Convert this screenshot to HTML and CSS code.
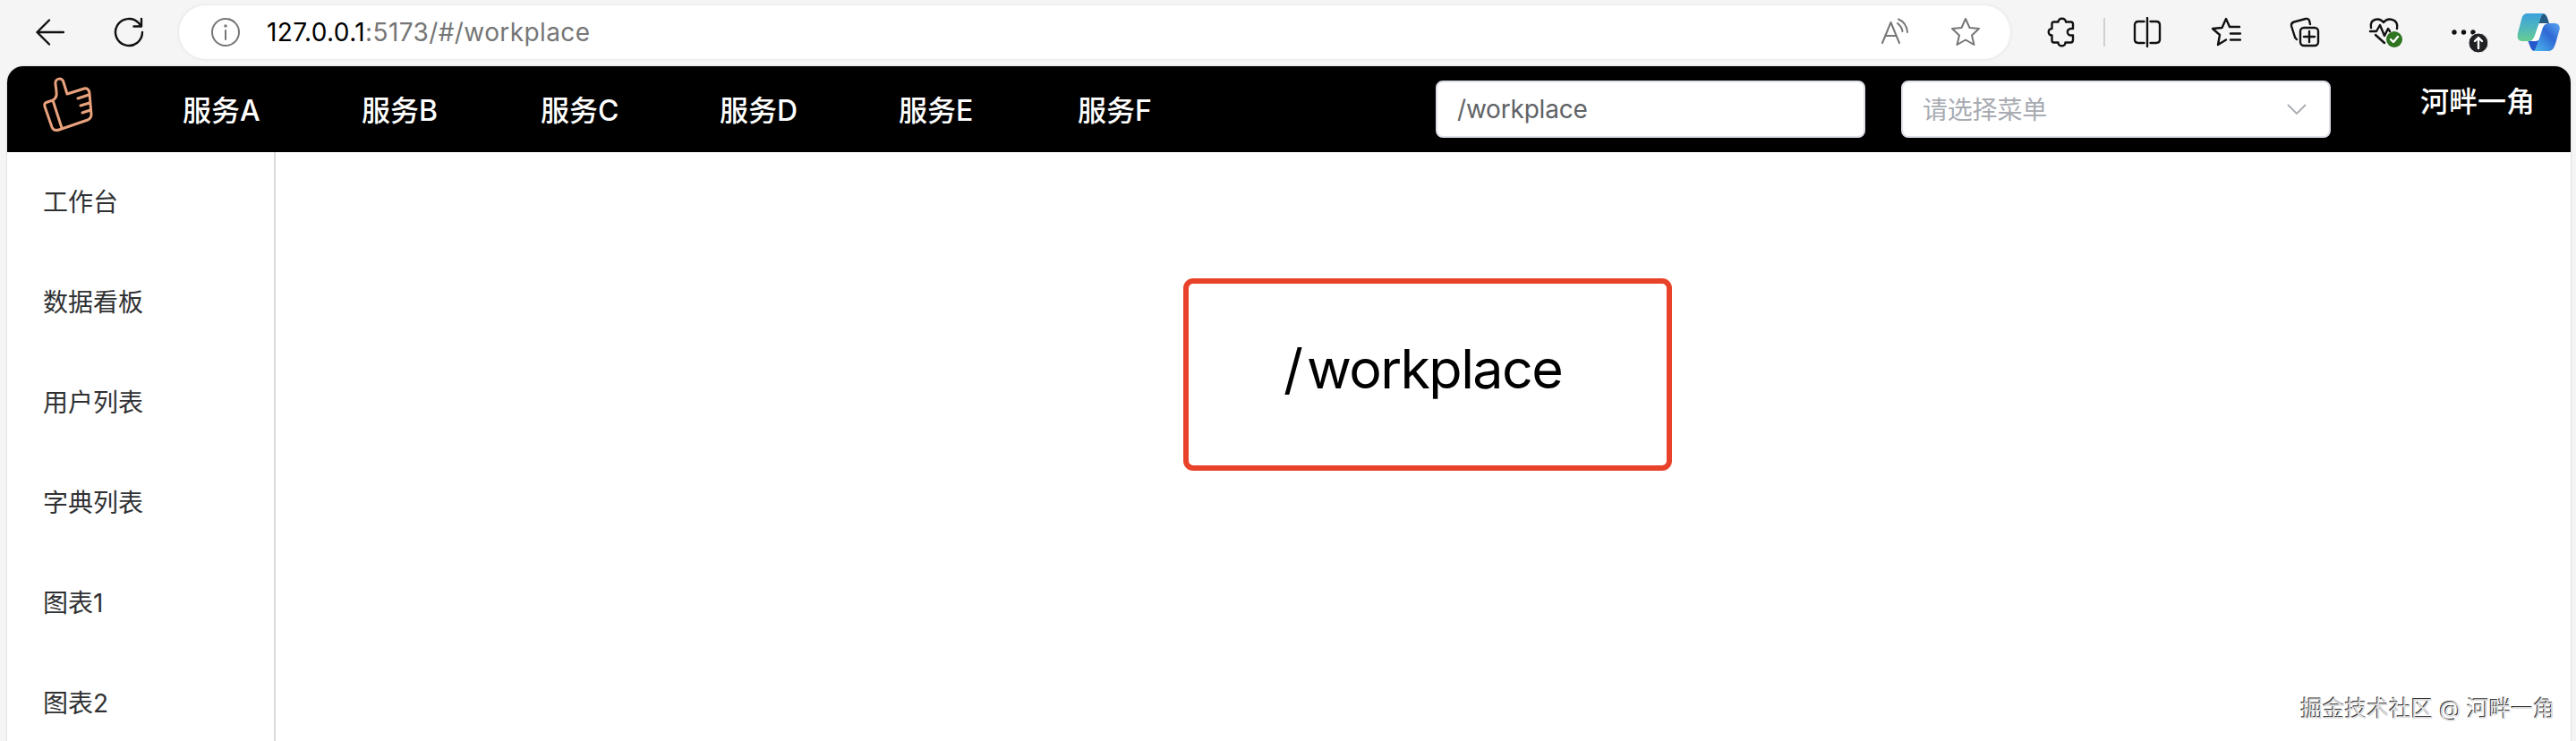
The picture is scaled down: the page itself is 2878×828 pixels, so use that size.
FILE: index.html
```
<!DOCTYPE html>
<html lang="zh-CN">

<head>
    <meta charset="UTF-8">
    <meta name="viewport" content="width=device-width, initial-scale=1.0">
    <title>workplace</title>
    <link rel="stylesheet" href="styles.css">
</head>

<body>
    <!-- 浏览器工具栏 -->
    <div class="browser-bar">
        <div class="nav-icons">
            <svg class="icon" width="32" height="32" viewBox="0 0 32 32"><path d="M31 16H1.5M15 2.500L1.500 16L15 29.500"/></svg>
            <svg class="icon" width="34" height="34" viewBox="0 0 34 34"><path d="M32 17A15 15 0 1 1 28 6.800L30.500 10M31 2V10.500H22.500"/></svg>
        </div>
        <div class="address">
            <svg class="icon gray" width="34" height="34" viewBox="0 0 34 34"><circle cx="17" cy="17" r="15"/><path d="M17 15V25"/><circle class="dot" cx="17" cy="10" r="1.700"/></svg>
            <div class="url"><span class="host">127.0.0.1</span>:5173/#/workplace</div>
            <svg class="icon gray read" width="32" height="32" viewBox="0 0 32 32"><path d="M2 28L11.500 5L21 28M5.500 20H17.500M19 6C22 8.500 24 11.500 24.500 15M20 1.500C26 4 29.500 10 30 16"/></svg>
            <svg class="icon gray" width="34" height="34" viewBox="0 0 34 34"><path d="M17 2L21.500 12L32 13L24 20.500L26.500 31L17 25.500L7.500 31L10 20.500L2 13L12.500 12Z"/></svg>
        </div>
        <div class="tools">
            <svg class="icon" width="32" height="34" viewBox="0 0 32 34"><path d="M7.500 5.500H12.500C12.500 0.500 21 0.500 21 5.500H26.500Q29 5.500 29 8V13H27C21.500 13 21.500 20.500 27 20.500H29V25.500Q29 28.500 26.500 28.500H20.500C20.500 33.500 12.500 33.500 12.500 28.500H7.500Q5.500 28.500 5.500 26V20.500C0.500 20.500 0.500 13 5.500 13V8Q5.500 5.500 7.500 5.500Z"/></svg>
            <div class="split"></div>
            <svg class="icon panel" width="32" height="34" viewBox="0 0 32 34"><path d="M12.500 5H6Q2 5 2 9V25Q2 29 6 29H12.500M19.500 5H26Q30 5 30 9V25Q30 29 26 29H19.500M16 1V33"/></svg>
            <svg class="icon fav" width="34" height="34" viewBox="0 0 34 34"><path d="M17 25.500L8 31L10 20L2 13L12.500 12L17 2L21 11H32M22 18.500H33M22 25.500H33"/></svg>
            <svg class="icon coll" width="34" height="34" viewBox="0 0 34 34"><path d="M8 25Q6 24 5.500 21L2 10Q1.500 6.500 5 5.500L18 2Q21 1.500 22 4L23 8"/><rect x="12" y="12" width="20" height="20" rx="4"/><path d="M22 16V28M16 22H28"/></svg>
            <svg class="icon heart" width="40" height="36" viewBox="0 0 40 36"><path d="M3 13C1 3 12 1 17 7C22 1 34 3 32 14M2 17H9L13 10L18 22L22 14L24 17M8 21L18 30"/><circle class="green" cx="29" cy="26" r="9"/><path class="white" d="M25 26L28 29L33 23"/></svg>
            <svg class="icon more" width="44" height="40" viewBox="0 0 44 40"><circle class="dot" cx="4" cy="17" r="2.700"/><circle class="dot" cx="14.500" cy="17" r="2.700"/><circle class="dot" cx="25" cy="17" r="2.700"/><circle class="badge" cx="31" cy="29" r="11"/><path class="white" d="M31 35V23M27 27L31 23L35 27"/></svg>
            <svg class="copilot" width="48" height="44" viewBox="0 0 48 44">
                <defs>
                    <linearGradient id="g1" x1="0" y1="0" x2="0" y2="1"><stop offset="0" stop-color="#3ba0dc"/><stop offset=".5" stop-color="#4fb5bd"/><stop offset="1" stop-color="#66cd91"/></linearGradient>
                    <linearGradient id="g2" x1="1" y1="0" x2="0" y2="1"><stop offset="0" stop-color="#5ba8f0"/><stop offset=".4" stop-color="#2f68d5"/><stop offset="1" stop-color="#4dbdee"/></linearGradient>
                </defs>
                <path fill="#2558cc" d="M12 31H25L20 43C15 43 15 37 12 31Z"/>
                <path fill="#245b84" d="M24 12L28 1C34 1 34 7 36 12Z"/>
                <path fill="url(#g1)" d="M12 1H31C27 2 26 7 25 11L20 26C18 31 16 32 12 32H6C1 32 0 28 1 23L5 8C6 3 8 1 12 1Z"/>
                <path fill="url(#g2)" d="M36 12H42C47 12 49 16 47 21L43 35C41 41 39 43 35 43H18C21 42 22 38 23 34L28 18C30 13 32 12 36 12Z"/>
                <path fill="#fff" d="M30 12H36C32 12 30 14 28.500 18L25 29C24 32 22 32 18 32H12C16 32 18 31 20 26L23.500 16C25 13 27 12 30 12Z"/>
            </svg>
        </div>
    </div>

    <!-- 页面 -->
    <div class="page">
        <div class="header">
            <svg class="logo" width="56" height="62" viewBox="0 0 56 62"><path d="M11 26C17 23 15 17 14 8C13 1 22 0 23 6L27 19L46 13Q51 12 52 18L54 42Q54 46 50 48L18 59Q12 61 10 56L2 33Q1 29 5 28ZM11 26L21 57M39 24L51 20M42 32L52 29M44 40L53 37"/></svg>
            <div class="menu">
                <div class="menu-item">服务A</div>
                <div class="menu-item">服务B</div>
                <div class="menu-item">服务C</div>
                <div class="menu-item">服务D</div>
                <div class="menu-item">服务E</div>
                <div class="menu-item">服务F</div>
            </div>
            <div class="field">/workplace</div>
            <div class="field select">
                <span>请选择菜单</span>
                <svg width="22" height="14" viewBox="0 0 22 14"><path d="M1 2L11 12L21 2"/></svg>
            </div>
            <div class="user">河畔一角</div>
        </div>
        <div class="main">
            <div class="sidebar">
                <div class="side-item">工作台</div>
                <div class="side-item">数据看板</div>
                <div class="side-item">用户列表</div>
                <div class="side-item">字典列表</div>
                <div class="side-item">图表1</div>
                <div class="side-item">图表2</div>
            </div>
            <div class="content">
                <div class="route"><span class="slash">/</span>workplace</div>
            </div>
        </div>
    </div>
    <div class="watermark">掘金技术社区 @ 河畔一角</div>
</body>

</html>
```
FILE: styles.css
```
* {
    box-sizing: border-box;
}

body {
    margin: 0;
    height: 828px;
    overflow: hidden;
    display: flex;
    flex-direction: column;
    background-color: #f5f5f5;
    font-family: Inter, 'Noto Sans CJK SC', sans-serif;
    position: relative;
}

/* 浏览器工具栏 */
.browser-bar {
    height: 74px;
    flex-shrink: 0;
    display: flex;
    align-items: flex-start;
    padding-top: 6px;
}

.icon {
    fill: none;
    stroke: #111;
    stroke-width: 2.4;
    stroke-linecap: round;
    stroke-linejoin: round;
    flex-shrink: 0;
}

.icon.gray {
    stroke: #767676;
    stroke-width: 2;
}

.icon .dot {
    fill: #111;
    stroke: none;
}

.icon.gray .dot {
    fill: #767676;
}

.icon .green {
    fill: #2f7420;
    stroke: none;
}

.icon .badge {
    fill: #202124;
    stroke: #f5f5f5;
    stroke-width: 1;
}

.icon .white {
    stroke: #fff;
}

.nav-icons {
    width: 200px;
    height: 60px;
    display: flex;
    align-items: center;
    gap: 55px;
    padding-left: 40px;
}

.address {
    width: 2046px;
    height: 60px;
    display: flex;
    align-items: center;
    padding: 0 33px 0 35px;
    background-color: #fff;
    border-radius: 30px;
    box-shadow: 0 0 4px rgba(0, 0, 0, 0.09);
}

.url {
    flex: 1;
    margin-left: 29px;
    font-size: 28px;
    letter-spacing: 0.4px;
    color: #767676;
}

.host {
    color: #000;
}

.read {
    margin-right: 46px;
}

.tools {
    flex: 1;
    height: 60px;
    display: flex;
    align-items: center;
    padding-left: 41px;
}

.split {
    width: 2px;
    height: 32px;
    margin: 0 31px 0 31px;
    background-color: #d0d0d0;
}

.fav {
    margin-left: 55px;
}

.coll {
    margin-left: 54px;
}

.heart {
    margin-left: 54px;
}

.more {
    margin: 5px 0 0 52px;
}

.copilot {
    margin-left: 30px;
    flex-shrink: 0;
}

/* 页面 */
.page {
    flex: 1;
    min-height: 0;
    margin: 0 6px 0 8px;
    display: flex;
    flex-direction: column;
    background-color: #fff;
    border-radius: 18px 18px 0 0;
    box-shadow: 0 0 2px rgba(0, 0, 0, 0.25);
    overflow: hidden;
}

.header {
    height: 96px;
    flex-shrink: 0;
    display: flex;
    align-items: center;
    padding-left: 40px;
    background-color: #000;
    color: #fff;
    font-size: 32px;
}

.logo {
    margin-top: -10px;
    fill: none;
    stroke: #e9a27c;
    stroke-width: 3;
    stroke-linecap: round;
    stroke-linejoin: round;
}

.menu {
    flex: 1;
    display: flex;
    padding: 0 0 3px 100px;
}

.menu-item {
    width: 200px;
    font-weight: 500;
}

.field {
    width: 480px;
    height: 64px;
    margin-right: 40px;
    padding: 0 22px;
    display: flex;
    align-items: center;
    background-color: #fff;
    border: 2px solid #dcdfe6;
    border-radius: 8px;
    color: #606266;
    font-size: 28px;
    letter-spacing: -0.2px;
}

.select {
    justify-content: space-between;
    margin-right: 100px;
    padding-right: 25px;
    color: #a8abb2;
}

.select span {
    padding-bottom: 2px;
}

.select svg {
    fill: none;
    stroke: #a8abb2;
    stroke-width: 1.8;
}

.user {
    width: 168px;
    margin-top: -23px;
    font-weight: 500;
}

.main {
    flex: 1;
    display: flex;
}

.sidebar {
    width: 300px;
    border-right: 2px solid #dcdcdc;
}

.side-item {
    height: 112px;
    padding-left: 40px;
    line-height: 112px;
    color: #303133;
    font-size: 28px;
}

.content {
    flex: 1;
    padding: 141px 0 0 1014px;
}

.route {
    width: 546px;
    height: 215px;
    padding: 55px 0 0 106px;
    border: 6px solid #e8432a;
    border-radius: 11px;
    font-size: 61px;
    line-height: 80px;
    letter-spacing: -1.6px;
    color: #000;
}

.slash {
    letter-spacing: 4px;
}

.watermark {
    position: absolute;
    right: 23px;
    bottom: 20px;
    font-size: 24.7px;
    color: #ddd;
    text-shadow: -1px -1px 0 #333;
}
```
